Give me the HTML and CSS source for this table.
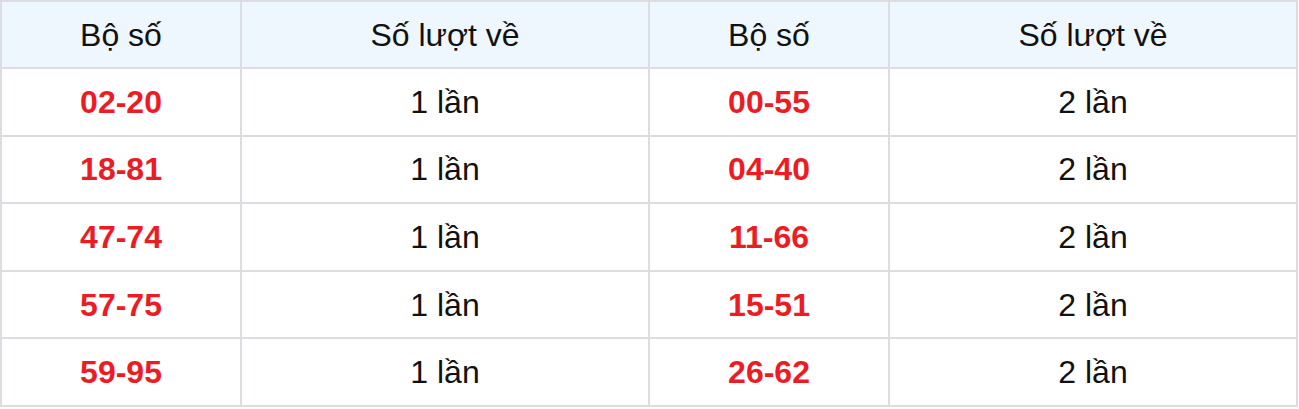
FILE: index.html
```html
<!DOCTYPE html>
<html lang="vi">
<head>
<meta charset="utf-8">
<title>Bộ số</title>
<link rel="stylesheet" href="styles.css">
</head>
<body>
<table class="stats">
  <colgroup>
    <col class="c-pair">
    <col class="c-count">
    <col class="c-pair">
    <col class="c-count">
  </colgroup>
  <thead>
    <tr><th>Bộ số</th><th>Số lượt về</th><th>Bộ số</th><th>Số lượt về</th></tr>
  </thead>
  <tbody>
    <tr><td class="pair">02-20</td><td>1 lần</td><td class="pair">00-55</td><td>2 lần</td></tr>
    <tr><td class="pair">18-81</td><td>1 lần</td><td class="pair">04-40</td><td>2 lần</td></tr>
    <tr><td class="pair">47-74</td><td>1 lần</td><td class="pair">11-66</td><td>2 lần</td></tr>
    <tr><td class="pair">57-75</td><td>1 lần</td><td class="pair">15-51</td><td>2 lần</td></tr>
    <tr><td class="pair">59-95</td><td>1 lần</td><td class="pair">26-62</td><td>2 lần</td></tr>
  </tbody>
</table>
</body>
</html>
```
FILE: styles.css
```css
html, body {
  margin: 0;
  padding: 0;
  background: #ffffff;
}

.stats {
  border-collapse: collapse;
  table-layout: fixed;
  width: 1297px;
  height: 407px;
  font-family: "Liberation Sans", Arial, sans-serif;
  font-size: 32px;
  color: #111111;
}

.stats tr {
  height: 67px;
}

.c-pair { width: 240px; }
.c-count { width: 408px; }

.stats th,
.stats td {
  border: 2px solid #dcdde2;
  text-align: center;
  vertical-align: middle;
  padding: 0;
  line-height: 1;
}

.stats th {
  background: #eef6fe;
  font-weight: normal;
}

.stats td.pair {
  color: #ec1c24;
  font-weight: bold;
}
```
